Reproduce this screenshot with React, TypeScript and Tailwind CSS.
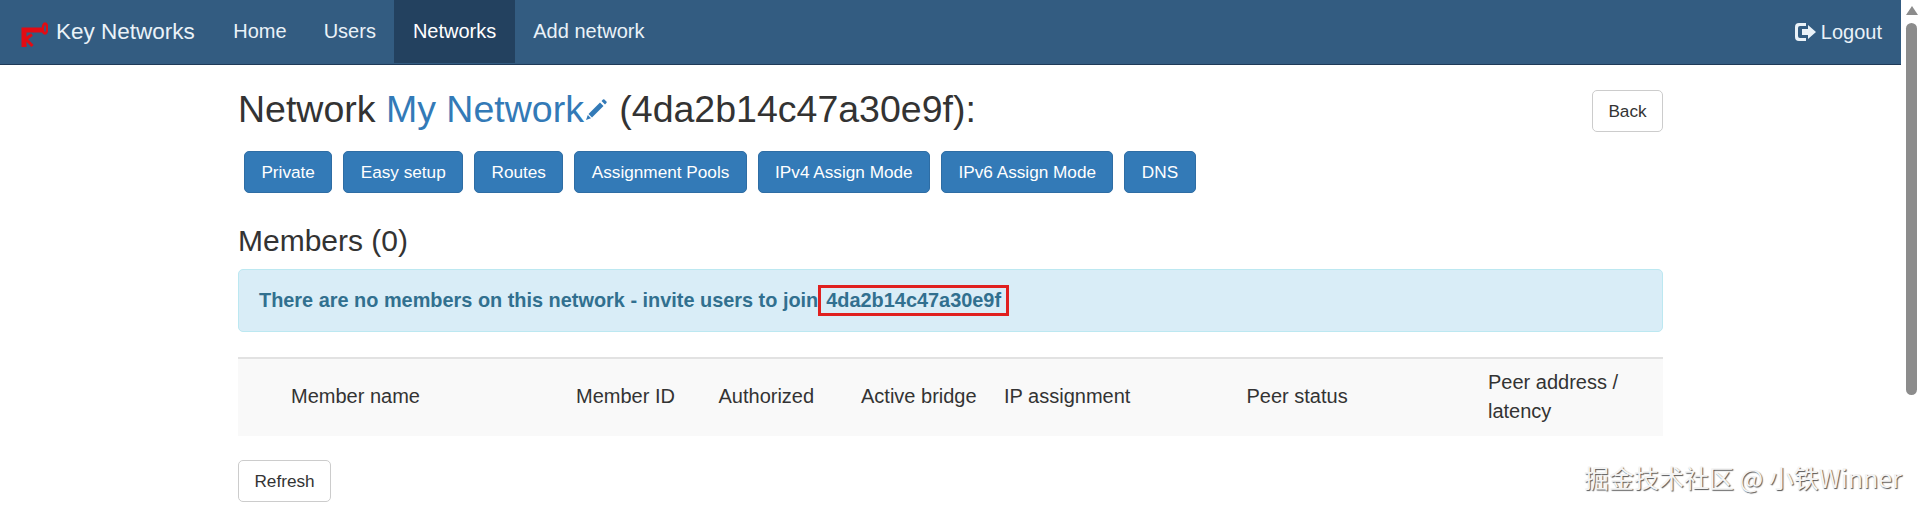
const sans = 'font-["Liberation_Sans",Arial,sans-serif]';

const navLinks = [
  { label: 'Home', active: false },
  { label: 'Users', active: false },
  { label: 'Networks', active: true },
  { label: 'Add network', active: false },
];

const actions = [
  'Private',
  'Easy setup',
  'Routes',
  'Assignment Pools',
  'IPv4 Assign Mode',
  'IPv6 Assign Mode',
  'DNS',
];

// Red key logo next to the brand
const KeyLogo = () => (
  <svg width="28" height="26" viewBox="0 0 28 26" fill="none" className="mt-[4px] shrink-0">
    <path d="M4 26V9h19" stroke="#e30b13" strokeWidth="5" />
    <ellipse cx="25" cy="7.500" rx="2.200" ry="5" stroke="#e30b13" strokeWidth="2.400" />
    <path d="M6 18l6-4.500M6 18l6.500 7" stroke="#e30b13" strokeWidth="3" />
  </svg>
);

const LogoutIcon = () => (
  <svg width="22" height="18" viewBox="0 0 22 18" fill="#eaf2f8" className="shrink-0">
    <path d="M4 0h7v3H5a2 2 0 0 0-2 2v8a2 2 0 0 0 2 2h6v3H4a4 4 0 0 1-4-4V4a4 4 0 0 1 4-4z" />
    <path d="M7 6h6V2l8 7-8 7v-4H7z" />
  </svg>
);

const PencilIcon = () => (
  <svg width="25" height="22" viewBox="0 0 25 22" fill="#337ab7" className="shrink-0">
    <path d="M16 3.500l3.500 3.500L8 18.500l-3.500-3.500z" />
    <path d="M17.500 2L19 .5a1 1 0 0 1 1.400 0l2 2a1 1 0 0 1 0 1.400L21 5.500z" />
    <path d="M3.800 16L7 19.200 2 21z" />
  </svg>
);

const Scrollbar = () => (
  <div className="w-[19px] shrink-0 flex flex-col items-center pl-[2px] bg-white">
    <div className="mt-[6px] w-0 h-0 border-x-[6px] border-x-transparent border-b-[9px] border-b-[#8c8c8c]" />
    <div className="mt-[8px] w-[11px] h-[372px] rounded-[6px] bg-[#8c8c8c]" />
  </div>
);

export default function App() {
  return (
    <div className={`${sans} relative flex h-[510px] w-[1920px] overflow-hidden bg-white text-[20px] leading-[28.6px] text-[#333]`}>
      <div className="w-[1901px] shrink-0">
        <nav className="flex h-[65px] items-stretch border-b border-b-[#1f3a58] bg-[#335c81] text-[#eaf2f8]">
          <a className="flex h-[64px] items-center pl-[20px] pr-[20px] text-[22.500px]">
            <KeyLogo />
            <span className="ml-[8px]">Key Networks</span>
          </a>
          <ul className="flex">
            {navLinks.map((link) => (
              <li key={link.label}>
                <a className={`flex h-[63px] items-center px-[18.500px] ${link.active ? 'bg-[#23415f] text-white' : ''}`}>
                  {link.label}
                </a>
              </li>
            ))}
          </ul>
          <a className="ml-auto flex h-[64px] items-center gap-[4px] pr-[19px]">
            <LogoutIcon />
            Logout
          </a>
        </nav>

        <main className="mx-auto w-[1425px]">
          <div className="flex items-start justify-between pt-[25px]">
            <h1 className="flex items-center text-[37.500px] leading-[39px] font-normal text-[#333]">
              <span className="whitespace-pre">Network </span>
              <a className="text-[#337ab7]">My Network</a>
              <PencilIcon />
              <span className="whitespace-pre"> (4da2b14c47a30e9f):</span>
            </h1>
            <button className="h-[42px] w-[71px] rounded-[5px] border border-[#ccc] bg-white text-[17.200px] text-[#333]">
              Back
            </button>
          </div>

          <div className="mt-[19px] flex gap-[11px] pl-[6px]">
            {actions.map((action) => (
              <button
                key={action}
                className="h-[42px] rounded-[5px] border border-[#2e6da4] bg-[#337ab7] px-[16.400px] text-[17.200px] whitespace-nowrap text-white"
              >
                {action}
              </button>
            ))}
          </div>

          <h2 className="mt-[30px] text-[30px] leading-[36px] font-normal">Members (0)</h2>

          <div className="mt-[10px] flex h-[63px] items-center rounded-[5px] border border-[#bce8f1] bg-[#d9edf7] pl-[20px] text-[19.900px] font-bold text-[#31708f]">
            <span className="whitespace-pre">There are no members on this network - invite users to join</span>
            <span className="border-[3px] border-[#e0201f] px-[5px] leading-[25px]">4da2b14c47a30e9f</span>
          </div>

          <table className="mt-[25px] w-[1425px] table-fixed border-t-2 border-t-[#e2e2e2] bg-[#f9f9f9] text-left">
            <thead>
              <tr className="h-[78px]">
                <th className="w-[43px]" />
                <th className="w-[285px] px-[10px] pb-[2px] font-normal">Member name</th>
                <th className="w-[142.500px] px-[10px] pb-[2px] font-normal">Member ID</th>
                <th className="w-[142.500px] px-[10px] pb-[2px] font-normal">Authorized</th>
                <th className="w-[143px] px-[10px] pb-[2px] font-normal">Active bridge</th>
                <th className="w-[242.500px] px-[10px] pb-[2px] font-normal">IP assignment</th>
                <th className="w-[241.500px] px-[10px] pb-[2px] font-normal">Peer status</th>
                <th className="w-[185px] px-[10px] pb-[2px] font-normal">Peer address / latency</th>
              </tr>
            </thead>
          </table>

          <button className="mt-[24px] h-[42px] w-[93px] rounded-[5px] border border-[#ccc] bg-white text-[17.200px] text-[#333]">
            Refresh
          </button>
        </main>
      </div>

      <Scrollbar />

      {/* watermark sits over the page */}
      <div className='absolute top-[462px] left-[1584px] font-["Noto_Sans_CJK_SC","Liberation_Sans",sans-serif] text-[25px] leading-[30px] whitespace-nowrap text-[#f4f4f4] [text-shadow:1px_1px_1px_#555]'>
        掘金技术社区 @ 小铁Winner
      </div>
    </div>
  );
}
